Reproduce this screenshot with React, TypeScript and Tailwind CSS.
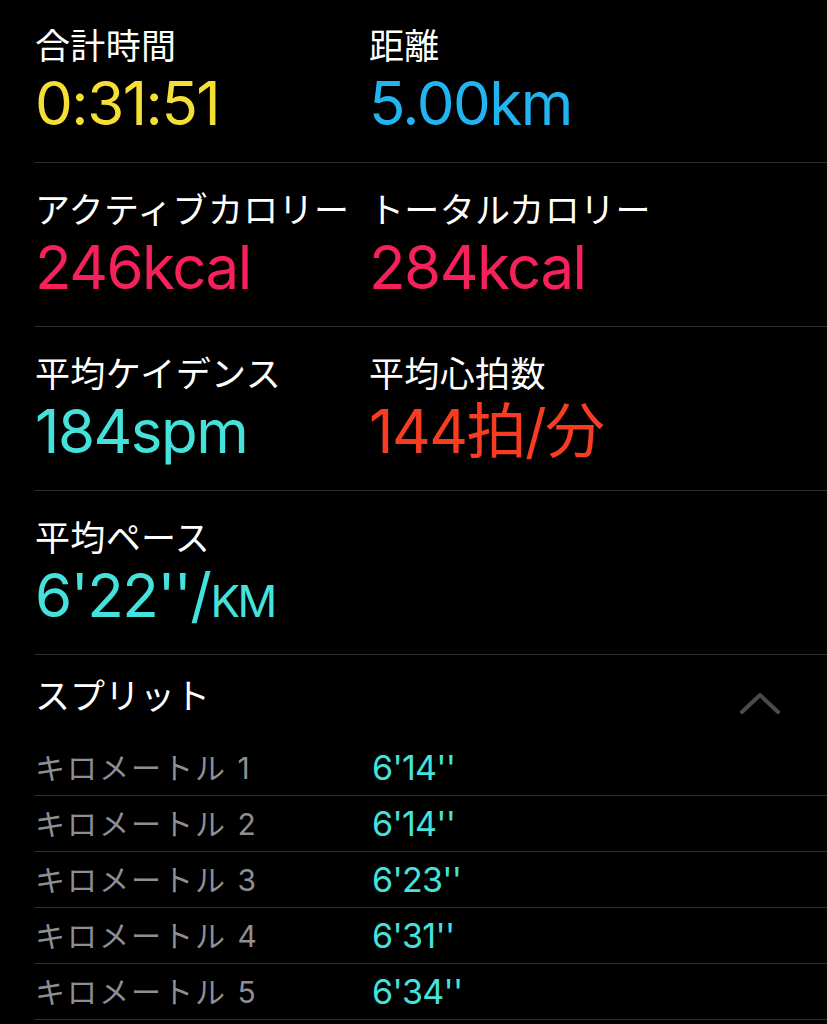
import React from "react";

type Stat = { label: string; value: React.ReactNode; color: string };

const rows: Stat[][] = [
  [
    { label: "合計時間", value: "0:31:51", color: "text-[#f5df36]" },
    { label: "距離", value: "5.00km", color: "text-[#22b4f1]" },
  ],
  [
    { label: "アクティブカロリー", value: "246kcal", color: "text-[#f6215a]" },
    { label: "トータルカロリー", value: "284kcal", color: "text-[#f6215a]" },
  ],
  [
    { label: "平均ケイデンス", value: "184spm", color: "text-[#45e2dc]" },
    { label: "平均心拍数", value: "144拍/分", color: "text-[#f83c22]" },
  ],
  [
    {
      label: "平均ペース",
      value: (
        <>
          6'22''/<span className="text-[44px] tracking-[-0.06em]">KM</span>
        </>
      ),
      color: "text-[#45e2dc] tracking-[-0.04em]",
    },
  ],
];

const splits = [
  ["キロメートル 1", "6'14''"],
  ["キロメートル 2", "6'14''"],
  ["キロメートル 3", "6'23''"],
  ["キロメートル 4", "6'31''"],
  ["キロメートル 5", "6'34''"],
];

const font = "font-['Inter','Noto_Sans_CJK_JP',sans-serif]";

export default function App() {
  return (
    <div className={`min-h-[1024px] w-[827px] bg-black text-white ${font}`}>
      {rows.map((row, i) => (
        <div
          key={i}
          className={`ml-[35px] grid grid-cols-[334px_1fr] border-b border-[#2e2e30] ${
            i === 0 ? "h-[163px] pt-[24px]" : "h-[164px] pt-[25px]"
          }`}
        >
          {row.map((s) => (
            <div key={s.label} className="flex flex-col">
              <div className="text-[35px] leading-[44px] tracking-[0.01em] whitespace-nowrap">{s.label}</div>
              <div className={`text-[60px] leading-[70px] tracking-[-0.025em] whitespace-nowrap ${s.color}`}>
                {s.value}
              </div>
            </div>
          ))}
        </div>
      ))}

      <div className="ml-[35px] flex h-[85px] items-start justify-between pr-[45px] pt-[19px]">
        <div className="text-[35px] leading-[44px]">スプリット</div>
        <svg width="44" height="26" viewBox="0 0 44 26" className="mt-[16px]">
          <path d="M4 22 L22 5 L40 22" fill="none" stroke="#4a4a4c" strokeWidth="4" strokeLinecap="round" strokeLinejoin="round" />
        </svg>
      </div>

      {splits.map(([k, v]) => (
        <div key={k} className="ml-[35px] grid h-[56px] grid-cols-[337px_1fr] items-center border-b border-[#2e2e30]">
          <div className="text-[30px] leading-none tracking-[2px] text-[#8e8e93] whitespace-nowrap">{k}</div>
          <div className="text-[34px] leading-none tracking-[-0.02em] text-[#45e2dc]">{v}</div>
        </div>
      ))}
    </div>
  );
}
